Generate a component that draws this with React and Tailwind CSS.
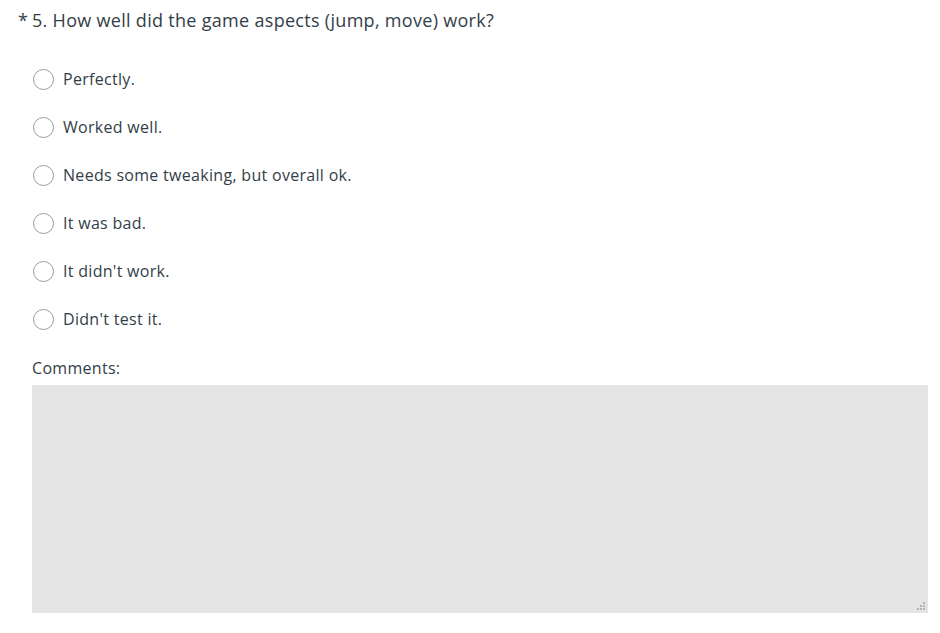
const options = [
  'Perfectly.',
  'Worked well.',
  'Needs some tweaking, but overall ok.',
  'It was bad.',
  "It didn't work.",
  "Didn't test it.",
]

export default function App() {
  return (
    <div className="min-h-screen bg-white font-['Open_Sans',sans-serif] text-[#333e48]">
      <div className="pl-[18px] pr-3 pt-[7px]">
        <h2 className="flex text-[18px] leading-[26px] tracking-[0.3px]">
          <span className="w-[14px]">*</span>
          <span>5. How well did the game aspects (jump, move) work?</span>
        </h2>
      </div>

      <div className="mt-[34px] flex flex-col gap-[24px] pl-[33px]">
        {options.map((label) => (
          <label key={label} className="flex h-[24px] items-center gap-[9px] text-[16px] tracking-[0.3px]">
            <span className="h-[21px] w-[21px] rounded-full border border-[#9b9b9b] bg-white" />
            <span>{label}</span>
          </label>
        ))}
      </div>

      <div className="pl-[32px] pr-3 pt-[25px]">
        <p className="text-[16px] leading-[24px] tracking-[0.3px]">Comments:</p>
        <div className="relative mt-[5px] h-[228px] w-[896px] bg-[#e4e4e4]">
          <svg className="absolute bottom-[2px] right-[2px]" width="9" height="9" viewBox="0 0 9 9">
            <rect x="6" y="0" width="2" height="2" fill="#b3b3b3" />
            <rect x="3" y="3" width="2" height="2" fill="#b3b3b3" />
            <rect x="6" y="3" width="2" height="2" fill="#b3b3b3" />
            <rect x="0" y="6" width="2" height="2" fill="#b3b3b3" />
            <rect x="3" y="6" width="2" height="2" fill="#b3b3b3" />
            <rect x="6" y="6" width="2" height="2" fill="#b3b3b3" />
          </svg>
        </div>
      </div>
    </div>
  )
}
